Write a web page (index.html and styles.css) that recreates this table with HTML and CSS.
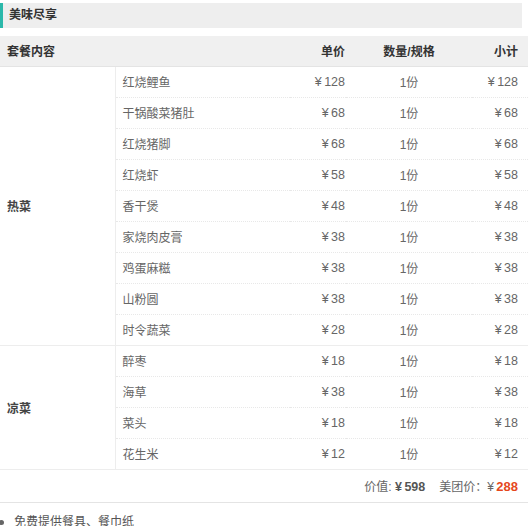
FILE: index.html
```html
<!DOCTYPE html>
<html lang="zh">
<head>
<meta charset="utf-8">
<link rel="stylesheet" href="styles.css">
</head>
<body>
<div class="page">
  <h3 class="title">美味尽享</h3>
  <table class="menu">
    <thead>
      <tr>
        <th class="c-cat">套餐内容</th>
        <th class="c-name"></th>
        <th class="c-price">单价</th>
        <th class="c-qty">数量/规格</th>
        <th class="c-sub">小计</th>
      </tr>
    </thead>
    <tbody>
      <tr><td class="c-cat" rowspan="9">热菜</td><td class="c-name">红烧鲤鱼</td><td class="c-price">¥ 128</td><td class="c-qty">1份</td><td class="c-sub">¥ 128</td></tr>
      <tr><td class="c-name">干锅酸菜猪肚</td><td class="c-price">¥ 68</td><td class="c-qty">1份</td><td class="c-sub">¥ 68</td></tr>
      <tr><td class="c-name">红烧猪脚</td><td class="c-price">¥ 68</td><td class="c-qty">1份</td><td class="c-sub">¥ 68</td></tr>
      <tr><td class="c-name">红烧虾</td><td class="c-price">¥ 58</td><td class="c-qty">1份</td><td class="c-sub">¥ 58</td></tr>
      <tr><td class="c-name">香干煲</td><td class="c-price">¥ 48</td><td class="c-qty">1份</td><td class="c-sub">¥ 48</td></tr>
      <tr><td class="c-name">家烧肉皮膏</td><td class="c-price">¥ 38</td><td class="c-qty">1份</td><td class="c-sub">¥ 38</td></tr>
      <tr><td class="c-name">鸡蛋麻糍</td><td class="c-price">¥ 38</td><td class="c-qty">1份</td><td class="c-sub">¥ 38</td></tr>
      <tr><td class="c-name">山粉圆</td><td class="c-price">¥ 38</td><td class="c-qty">1份</td><td class="c-sub">¥ 38</td></tr>
      <tr class="last"><td class="c-name">时令蔬菜</td><td class="c-price">¥ 28</td><td class="c-qty">1份</td><td class="c-sub">¥ 28</td></tr>
      <tr><td class="c-cat" rowspan="4">凉菜</td><td class="c-name">醉枣</td><td class="c-price">¥ 18</td><td class="c-qty">1份</td><td class="c-sub">¥ 18</td></tr>
      <tr><td class="c-name">海草</td><td class="c-price">¥ 38</td><td class="c-qty">1份</td><td class="c-sub">¥ 38</td></tr>
      <tr><td class="c-name">菜头</td><td class="c-price">¥ 18</td><td class="c-qty">1份</td><td class="c-sub">¥ 18</td></tr>
      <tr class="last"><td class="c-name">花生米</td><td class="c-price">¥ 12</td><td class="c-qty">1份</td><td class="c-sub">¥ 12</td></tr>
    </tbody>
    <tfoot>
      <tr>
        <td colspan="5" class="total">价值: <b class="val">¥ 598</b><span class="gap"></span>美团价：<span class="yen">¥</span> <b class="deal">288</b></td>
      </tr>
    </tfoot>
  </table>
  <ul class="notes">
    <li>免费提供餐具、餐巾纸</li>
  </ul>
</div>
</body>
</html>
```

FILE: styles.css
```css
* { box-sizing: border-box; }
html, body { margin: 0; padding: 0; background: #fff; }
body {
  font-family: "Liberation Sans", "Noto Sans CJK SC", sans-serif;
  font-size: 12px;
  color: #666;
}
.page { width: 528px; padding-top: 3px; }
.title {
  margin: 0 6px 8px 0;
  height: 25px;
  line-height: 25px;
  background: #eeeeee;
  border-left: 3px solid #2bb8aa;
  padding-left: 6px;
  font-size: 12px;
  font-weight: bold;
  color: #333;
}
.menu {
  width: 528px;
  border-collapse: collapse;
  table-layout: fixed;
}
.menu th {
  height: 30px;
  background: #f0f0f0;
  font-weight: bold;
  color: #333;
  font-size: 12px;
  border-bottom: 1px solid #e4e4e4;
  padding: 0;
}
.menu td {
  height: 31px;
  padding: 0;
  border-bottom: 1px dotted #e8e8e8;
}
.menu tr.last td { border-bottom: 1px solid #ededed; }
.menu td.c-cat {
  border-bottom: 1px solid #ededed;
  border-right: 1px solid #ededed;
  font-weight: bold;
  color: #444;
}
.c-cat { width: 115px; text-align: left; padding-left: 7px !important; }
.c-name { width: 175px; padding-left: 7px !important; text-align: left; }
.c-price { width: 56px; text-align: right; padding-right: 1px !important; }
.c-qty { width: 126px; text-align: center; }
.c-sub { width: 56px; text-align: right; padding-right: 10px !important; }
td.c-price, td.c-sub { font-size: 12.5px; word-spacing: -1px; }
.total {
  height: 33px !important;
  text-align: right;
  padding-right: 10px !important;
  border-bottom: 1px solid #e4e4e4 !important;
  color: #666;
}
.total .val { color: #555; font-size: 12.5px; word-spacing: -1px; }
.total .gap { display: inline-block; width: 14px; }
.total .yen { margin-right: -1px; }
.total .deal { color: #e5471c; font-size: 13px; }
.notes {
  margin: 11px 0 0;
  padding: 0 0 0 14px;
  list-style: none;
}
.notes li { position: relative; line-height: 16px; color: #555; }
.notes li::before {
  content: "";
  position: absolute;
  left: -15px;
  top: 6px;
  width: 5px;
  height: 5px;
  border-radius: 50%;
  background: #666;
}
```
